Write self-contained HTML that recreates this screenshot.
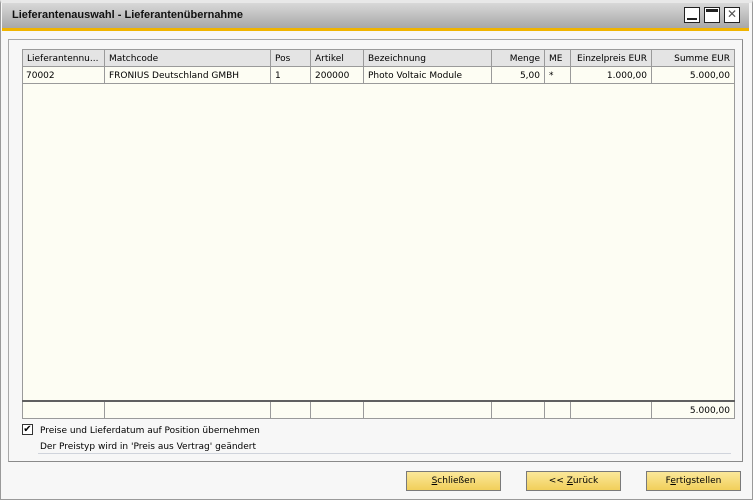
<!DOCTYPE html>
<html><head><style>
*{margin:0;padding:0;box-sizing:border-box}
body{width:753px;height:500px;background:#f4f4f4;font-family:Tahoma,"DejaVu Sans","Liberation Sans",sans-serif;font-size:9px;color:#000;position:relative;overflow:hidden}
.win{position:absolute;left:0;top:0;width:753px;height:500px;border:1px solid #9a9a9a;border-top:3px solid #e8e8e8;background:#f7f7f7}
.title{position:absolute;left:2px;top:3px;width:747px;height:25px;background:linear-gradient(#d8d8d8,#a8a8a8);font-weight:bold;font-size:11px;line-height:25px;padding-left:10px;color:#111;font-family:"Liberation Sans",sans-serif}
.orange{position:absolute;left:2px;top:28px;width:747px;height:3px;background:#f0b400}
.wb{position:absolute;top:7px;width:16px;height:16px;border:1px solid #222;background:#fff}
.panel{position:absolute;left:8px;top:39px;width:735px;height:423px;border:1px solid #a8a8a8;border-right-color:#8a8a8a;border-bottom-color:#8a8a8a;background:#f7f7f7}
.grid{position:absolute;left:22px;top:49px;width:713px;height:370px;background:#fdfdf3;border:1px solid #9a9a9a}
.c{position:absolute;border-right:1px solid #9a9a9a;height:17px;line-height:18px;padding:0 4px;white-space:nowrap;overflow:hidden}
.h{background:#e4e4e4;border-bottom:1px solid #9a9a9a}
.r{text-align:right}
.btn{position:absolute;top:471px;width:95px;height:20px;border:1px solid #7a7a7a;background:linear-gradient(#fbe89a,#f1cf5a);text-align:center;line-height:18px;font-size:9px}
</style></head><body>
<div class="win"></div>
<div class="title">Lieferantenauswahl - Lieferantenübernahme</div>
<div class="orange"></div>
<div class="wb" style="left:684px"><div style="position:absolute;left:2px;bottom:2px;width:10px;height:2px;background:#222"></div></div>
<div class="wb" style="left:704px"><div style="position:absolute;left:1px;top:1px;width:12px;height:3px;background:#222"></div></div>
<div class="wb" style="left:724px;text-align:center;line-height:13px;font-size:12px;color:#555">✕</div>
<div class="panel"></div>
<div class="grid"></div>
<div id="rows"></div>
<div style="position:absolute;left:22px;top:400px;width:713px;height:2px;background:#606060"></div>
<div style="position:absolute;left:22px;top:424px;width:11px;height:11px;border:1px solid #333;background:#fff;font-size:10px;line-height:9px;text-align:center">✔</div>
<div style="position:absolute;left:40px;top:425px;line-height:12px">Preise und Lieferdatum auf Position übernehmen</div>
<div style="position:absolute;left:40px;top:441px;line-height:12px">Der Preistyp wird in 'Preis aus Vertrag' geändert</div>
<div style="position:absolute;left:38px;top:453px;width:693px;height:1px;background:#d0d4dc"></div>
<div class="btn" style="left:406px"><u>S</u>chließen</div>
<div class="btn" style="left:526px">&lt;&lt; <u>Z</u>urück</div>
<div class="btn" style="left:646px">F<u>e</u>rtigstellen</div>
<script>
var cols=[22,105,271,311,364,492,545,571,652,735];
var H=["Lieferantennu...","Matchcode","Pos","Artikel","Bezeichnung","Menge","ME","Einzelpreis EUR","Summe EUR"];
var D=["70002","FRONIUS Deutschland GMBH","1","200000","Photo Voltaic Module","5,00","*","1.000,00","5.000,00"];
var F=["","","","","","","","","5.000,00"];
var R=[0,0,0,0,0,1,0,1,1];
var s="";
for(var i=0;i<9;i++){
 var l=cols[i],w=cols[i+1]-l;
 s+='<div class="c h'+(R[i]?' r':'')+'" style="left:'+l+'px;top:49px;width:'+w+'px;border-left:'+(i==0?'1px solid #9a9a9a':'0')+';border-top:1px solid #9a9a9a;height:18px">'+H[i]+'</div>';
 s+='<div class="c'+(R[i]?' r':'')+'" style="left:'+l+'px;top:67px;width:'+w+'px;border-bottom:1px solid #9a9a9a">'+D[i]+'</div>';
 s+='<div class="c'+(R[i]?' r':'')+'" style="left:'+l+'px;top:402px;width:'+w+'px;height:17px">'+F[i]+'</div>';
}
document.getElementById("rows").innerHTML=s;
</script>
</body></html>
